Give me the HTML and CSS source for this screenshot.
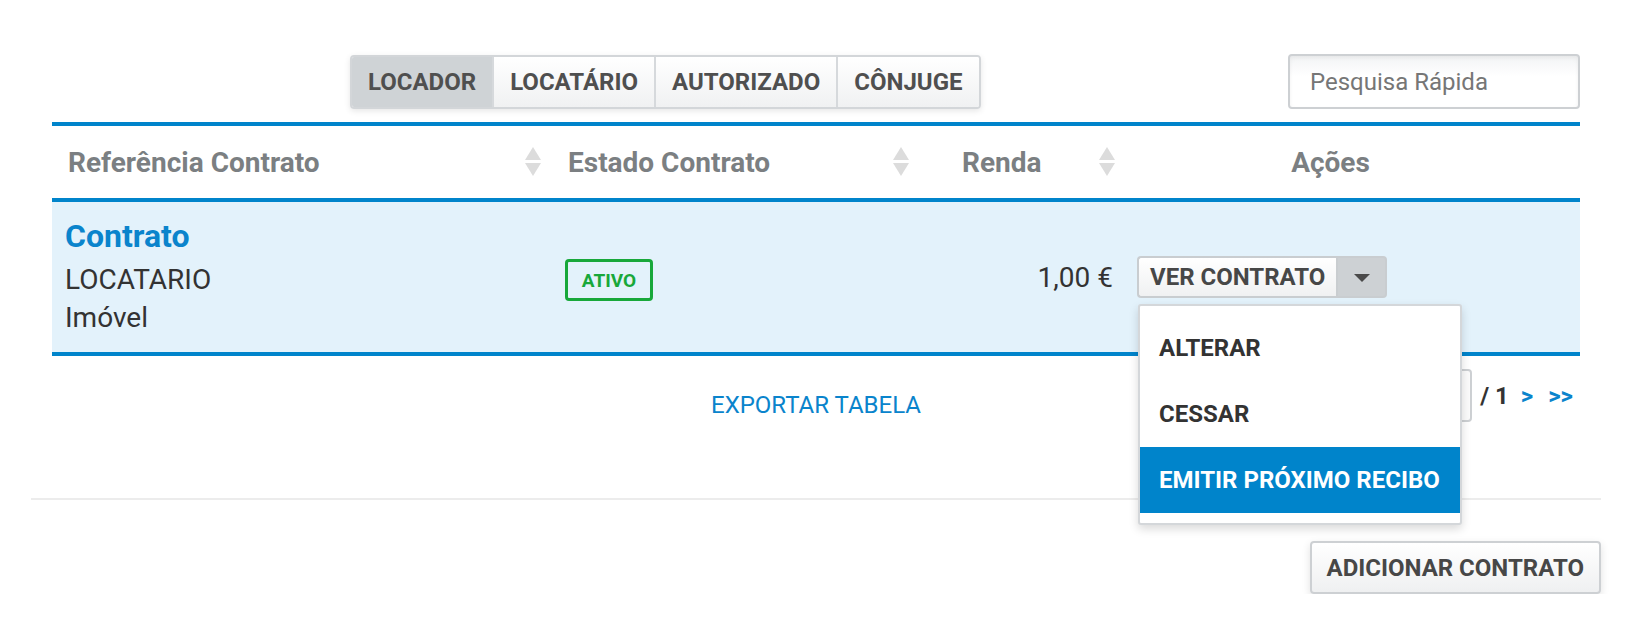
FILE: index.html
```html
<!DOCTYPE html>
<html lang="pt">
<head>
<meta charset="utf-8">
<title>Contratos</title>
<link rel="stylesheet" href="styles.css">
</head>
<body>
<div class="page">
  <div class="panel">
    <div class="toolbar">
      <div class="tabs">
        <button class="tab active">LOCADOR</button>
        <button class="tab">LOCATÁRIO</button>
        <button class="tab">AUTORIZADO</button>
        <button class="tab">CÔNJUGE</button>
      </div>
      <input class="search" type="text" placeholder="Pesquisa Rápida">
    </div>

    <div class="table">
      <div class="thead">
        <div class="th c1"><span>Referência Contrato</span><svg class="sort" viewBox="0 0 18 30"><polygon points="9,0 17,13 1,13"/><polygon points="1,16 17,16 9,29"/></svg></div>
        <div class="th c2"><span>Estado Contrato</span><svg class="sort" viewBox="0 0 18 30"><polygon points="9,0 17,13 1,13"/><polygon points="1,16 17,16 9,29"/></svg></div>
        <div class="th c3"><span>Renda</span><svg class="sort" viewBox="0 0 18 30"><polygon points="9,0 17,13 1,13"/><polygon points="1,16 17,16 9,29"/></svg></div>
        <div class="th c4"><span>Ações</span></div>
      </div>
      <div class="tr">
        <div class="td c1">
          <a class="ref">Contrato</a>
          <div class="sub first">LOCATARIO</div>
          <div class="sub">Imóvel</div>
        </div>
        <div class="td c2"><span class="badge">ATIVO</span></div>
        <div class="td c3">1,00 €</div>
        <div class="td c4">
          <div class="btn-group">
            <button class="btn-main">VER CONTRATO</button>
            <button class="btn-caret"><span class="caret"></span></button>
            <ul class="menu">
              <li>ALTERAR</li>
              <li>CESSAR</li>
              <li class="hl">EMITIR PRÓXIMO RECIBO</li>
            </ul>
          </div>
        </div>
      </div>
    </div>

    <div class="tfoot">
      <span></span>
      <a class="export">EXPORTAR TABELA</a>
      <div class="pager">
        <input class="page-input" type="text" value="1">
        <span class="total">/ 1</span>
        <a class="nav">&gt;</a>
        <a class="nav">&gt;&gt;</a>
      </div>
    </div>
  </div>

  <div class="rule"></div>

  <div class="actions">
    <button class="btn-add">ADICIONAR CONTRATO</button>
  </div>
</div>
</body>
</html>
```

FILE: styles.css
```css
* { box-sizing: border-box; }
html, body { margin: 0; padding: 0; background: #fff; }
body { font-family: Roboto, "Noto Sans", "Liberation Sans", sans-serif; color: #333; }

.page { width: 1570px; margin-left: 31px; padding-top: 54px; }
.panel { padding: 0 21px; }

/* toolbar */
.toolbar { display: grid; grid-template-columns: 298px auto 1fr auto; height: 55px; }
.tabs {
  grid-column: 2;
  display: flex; margin-top: 1px; height: 54px;
  border: 2px solid #d3d6d9; border-radius: 4px;
  box-shadow: 0 2px 6px rgba(0,0,0,0.10);
  overflow: hidden;
}
.tab {
  font-family: inherit; font-weight: 700; font-size: 24px; color: #4f4f4f;
  padding: 0 16px; border: 0; border-left: 2px solid #d6d9dc; white-space: nowrap;
  background: linear-gradient(#ffffff, #f0f1f2); cursor: pointer;
}
.tab:first-child { border-left: 0; }
.tab.active { background: #cfd3d6; }
.search {
  grid-column: 4;
  width: 292px; height: 55px;
  border: 2px solid #cdd0d3; border-radius: 4px;
  background: linear-gradient(#f3f4f5, #ffffff 40%);
  box-shadow: inset 0 2px 4px rgba(0,0,0,0.06);
  padding: 0 20px; font-family: inherit; font-size: 24px; color: #333;
}
.search::placeholder { color: #767676; }

/* table */
.table { margin-top: 13px; border-top: 4px solid #0084cb; }
.thead, .tr { display: grid; grid-template-columns: 498px 372px 206px 1fr; }
.thead { height: 76px; border-bottom: 4px solid #0084cb; }
.th {
  display: flex; align-items: center; justify-content: space-between;
  font-size: 28px; font-weight: 700; color: #7b7f82; white-space: nowrap;
}
.th.c1 { padding: 0 8px 0 16px; }
.th.c2 { padding: 0 12px 0 18px; }
.th.c3 { padding: 0 12px 0 40px; }
.th.c4 { justify-content: center; padding-right: 47px; }
.sort { width: 18px; height: 30px; fill: #dcdcdc; }

.tr { background: #e3f2fb; border-bottom: 4px solid #0084cb; height: 154px; }
.td { display: flex; }
.td.c1 { flex-direction: column; padding: 14px 13px 0; }
.ref { font-size: 32px; font-weight: 700; color: #0a84cc; line-height: 40px; }
.sub { font-size: 28px; line-height: 38px; color: #333; }
.sub.first { margin-top: 5px; }
.td.c2 { align-items: center; padding-left: 15px; }
.badge {
  margin-top: 6px;
  display: inline-flex; align-items: center; justify-content: center;
  width: 88px; height: 42px; border: 3px solid #18a83a; border-radius: 4px;
  color: #18a83a; font-weight: 700; font-size: 19px;
}
.td.c3 { align-items: center; justify-content: flex-end; padding-right: 15px; font-size: 28px; color: #333; }
.td.c4 { align-items: center; padding-left: 9px; }

.btn-group { position: relative; display: flex; height: 42px; }
.btn-main, .btn-caret {
  font-family: inherit; font-weight: 700; font-size: 24px; color: #474747;
  border: 2px solid #c9cdd0; height: 42px; cursor: pointer; white-space: nowrap;
}
.btn-main {
  padding: 0 11px; border-radius: 4px 0 0 4px; border-right: 0;
  background: linear-gradient(#ffffff, #f0f1f2);
}
.btn-caret {
  width: 51px; border-radius: 0 4px 4px 0; background: #cdd1d4;
  display: flex; align-items: center; justify-content: center;
}
.caret {
  width: 0; height: 0; border-left: 8px solid transparent; border-right: 8px solid transparent;
  border-top: 8px solid #4a4a4a; margin-top: 2px;
}
.menu {
  position: absolute; left: 1px; top: 48px; z-index: 5;
  width: 324px; margin: 0; padding: 9px 0 10px; list-style: none;
  background: #fff; border: 2px solid #d4d7da; border-radius: 3px;
  box-shadow: 0 4px 10px rgba(0,0,0,0.15);
}
.menu li {
  padding: 19px 19px; line-height: 28px; font-size: 24px; font-weight: 700; color: #333;
  white-space: nowrap;
}
.menu li.hl { background: #0084cb; color: #fff; }

/* footer */
.tfoot { display: grid; grid-template-columns: 1fr auto 1fr; padding-top: 13px; }
.export {
  margin-top: 22px; align-self: start;
  font-size: 24px; line-height: 28px; color: #0a84cc;
}
.pager { justify-self: end; display: flex; align-items: center; height: 53px; padding-right: 7px; }
.page-input {
  width: 90px; height: 53px; border: 2px solid #cdd0d3; border-radius: 4px;
  background: #fbfbfb; font-family: inherit; font-size: 24px; text-align: center; color: #333;
}
.total { font-size: 24px; font-weight: 700; color: #333; margin-left: 8px; }
.nav { font-size: 24px; font-weight: 700; color: #0a84cc; margin-left: 12px; }
.nav + .nav { margin-left: 15px; }

.rule { margin-top: 76px; height: 2px; background: #ececec; }

.actions { display: flex; justify-content: flex-end; margin-top: 41px; }
.btn-add {
  height: 53px; padding: 0 15px;
  font-family: inherit; font-weight: 700; font-size: 24px; color: #474747;
  border: 2px solid #cdd0d3; border-radius: 4px;
  background: linear-gradient(#ffffff, #eff0f1);
  box-shadow: 0 3px 8px rgba(0,0,0,0.12);
}
```
